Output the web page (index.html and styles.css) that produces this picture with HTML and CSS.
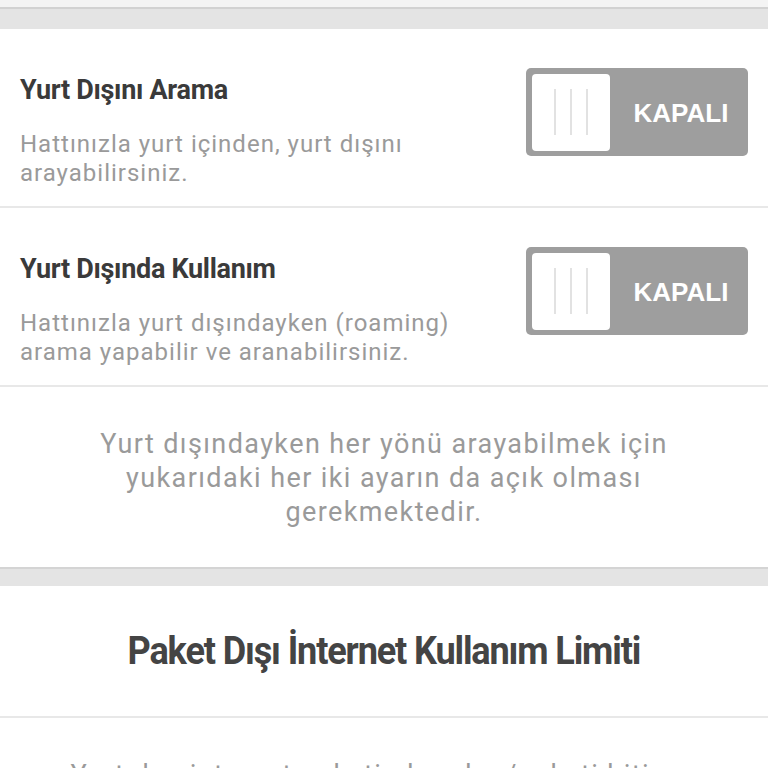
FILE: index.html
```html
<!DOCTYPE html>
<html lang="tr">
<head>
  <meta charset="UTF-8" />
  <title>Yurt Dışı Ayarları</title>
  <link rel="stylesheet" href="styles.css">
</head>
<body>
  <div class="top-strip"></div>
  <div class="gap"></div>

  <!-- arama ayarları -->
  <section class="card">
    <div class="setting-row">
      <div class="setting-text">
        <h2>Yurt Dışını Arama</h2>
        <p>Hattınızla yurt içinden, yurt dışını arayabilirsiniz.</p>
      </div>
      <div class="toggle">
        <div class="knob"><span></span><span></span><span></span></div>
        <div class="toggle-label">KAPALI</div>
      </div>
    </div>
    <div class="setting-row">
      <div class="setting-text">
        <h2>Yurt Dışında Kullanım</h2>
        <p>Hattınızla yurt dışındayken (roaming) arama yapabilir ve aranabilirsiniz.</p>
      </div>
      <div class="toggle">
        <div class="knob"><span></span><span></span><span></span></div>
        <div class="toggle-label">KAPALI</div>
      </div>
    </div>
    <p class="note">Yurt dışındayken her yönü arayabilmek için<br>yukarıdaki her iki ayarın da açık olması<br>gerekmektedir.</p>
  </section>

  <div class="gap"></div>

  <!-- internet limiti -->
  <section class="card">
    <h2 class="section-title"><span>Paket Dışı İnternet Kullanım Limiti</span></h2>
    <p class="note">Yurt dışı internet paketi olmadan/paketi bitince yaptığınız kullanımlar için limit belirleyebilirsiniz.</p>
  </section>
</body>
</html>
```

FILE: styles.css
```css
:root {
  --bg-gap: #e4e4e4;
  --line: #e8e8e8;
  --title: #3a3a3a;
  --text-light: #9a9a9a;
  --toggle: #9e9e9e;
}
* { box-sizing: border-box; margin: 0; padding: 0; }
body {
  font-family: Roboto, "Noto Sans", sans-serif;
  background: #fff;
  color: var(--title);
  overflow: hidden;
}
.top-strip {
  height: 9px;
  background: #f4f4f4;
  border-bottom: 2px solid #d2d2d2;
}
.gap {
  height: 20px;
  background: var(--bg-gap);
}
.card { background: #fff; }
.card + .gap { border-top: 2px solid #d4d4d4; height: 19px; }

.setting-row {
  display: flex;
  align-items: flex-start;
  justify-content: space-between;
  padding: 0 20px;
  border-bottom: 2px solid var(--line);
}
.setting-text {
  max-width: 460px;
  padding: 45px 0 18px;
}
.setting-text h2 {
  font-size: 27px;
  font-weight: 700;
  letter-spacing: -0.3px;
  line-height: 32px;
  color: var(--title);
}
.setting-text p {
  margin-top: 24px;
  font-size: 24px;
  line-height: 29px;
  letter-spacing: 1px;
  color: var(--text-light);
}

.toggle {
  flex: 0 0 auto;
  display: flex;
  align-items: center;
  width: 222px;
  height: 88px;
  margin-top: 39px;
  padding: 6px;
  border-radius: 5px;
  background: var(--toggle);
}
.knob {
  display: flex;
  justify-content: center;
  align-items: center;
  gap: 14px;
  width: 78px;
  height: 77px;
  border-radius: 4px;
  background: #fff;
}
.knob span {
  width: 2px;
  height: 46px;
  background: #e2e2e2;
}
.toggle-label {
  flex: 1;
  padding: 3px 0 0 10px;
  text-align: center;
  font-family: "Liberation Sans", Arial, sans-serif;
  font-weight: 700;
  font-size: 26px;
  color: #fff;
}

.note {
  padding: 40px 10px 38px;
  text-align: center;
  font-size: 27px;
  line-height: 34px;
  letter-spacing: 1.4px;
  color: var(--text-light);
}
.section-title {
  padding: 42px 20px;
  border-bottom: 2px solid var(--line);
  text-align: center;
  font-size: 38px;
  line-height: 46px;
  font-weight: 700;
  color: #444;
}
.section-title span {
  display: inline-block;
  letter-spacing: -1.2px;
  transform: scaleX(0.95);
}
```
